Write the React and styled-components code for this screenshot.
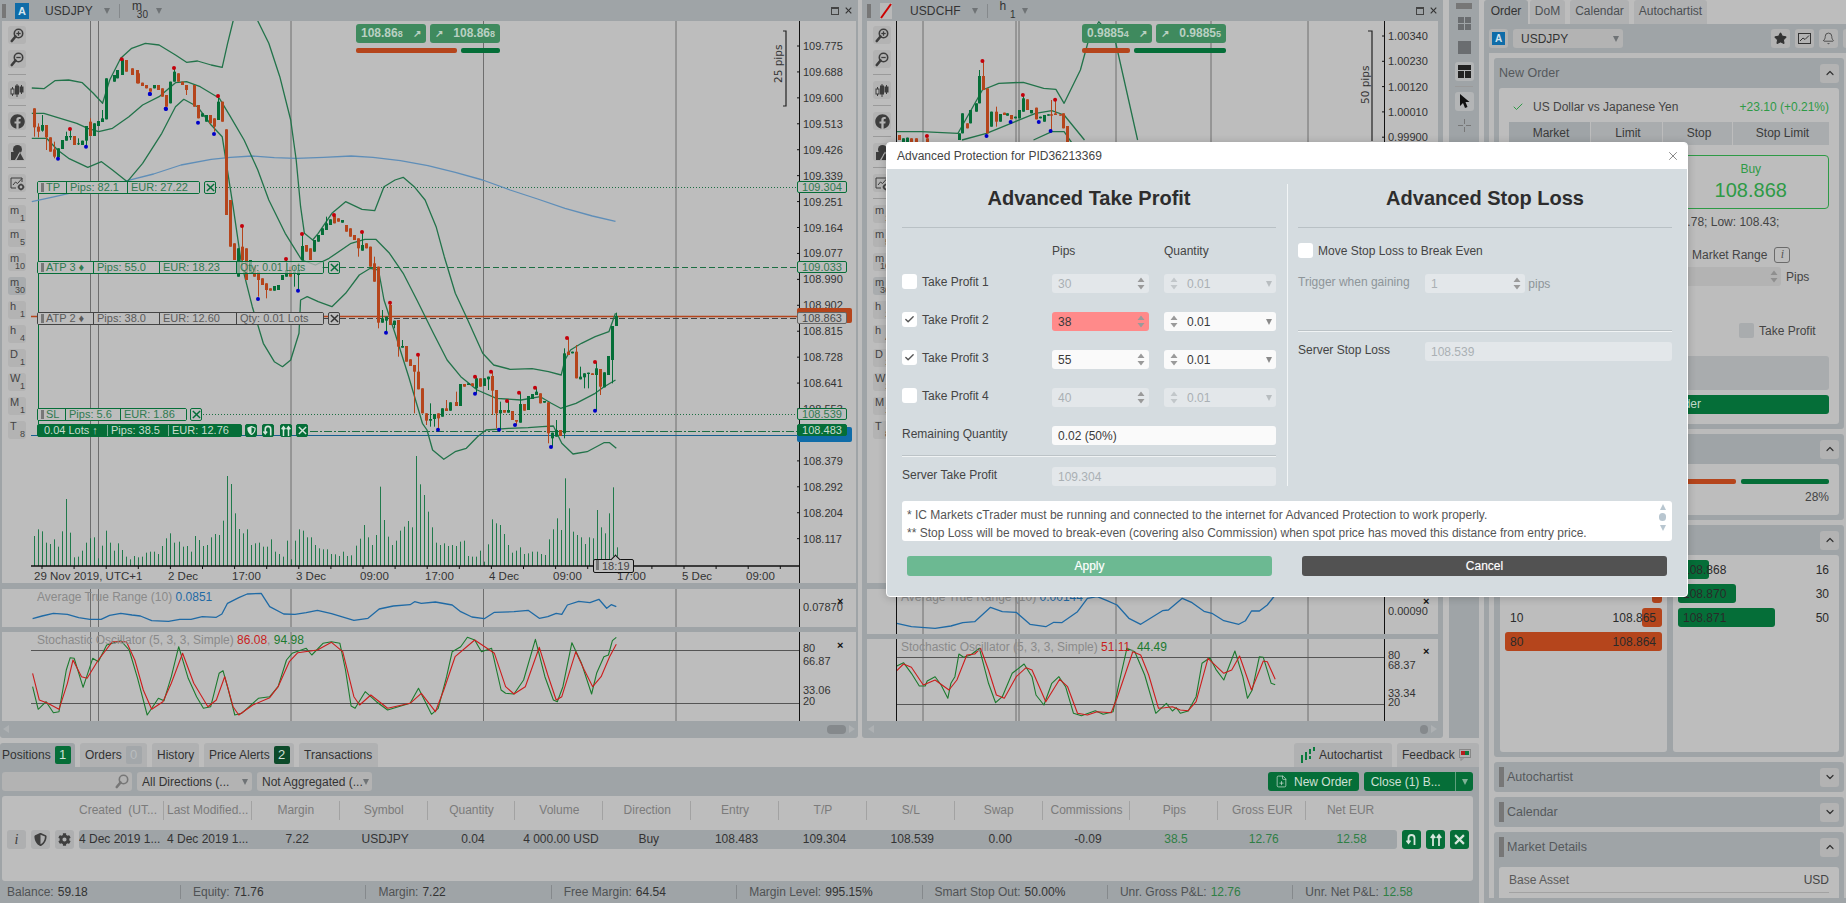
import React from "react";
import styled, { createGlobalStyle } from "styled-components";
import { Bell, Check, ChevronDown, ChevronUp, FilePlus, Star, X } from "lucide-react";
import { FaCog, FaFacebook, FaShieldAlt } from "react-icons/fa";

const FRAME = "#9fa4a7";
const BG = "#bdbdbd";
const GREEN = "#056e38";
const ORANGE = "#b5451c";
const TAG_GREEN = "#2f7a50";
const BAND = "#22734a";

const GlobalStyle = createGlobalStyle`
  html, body { margin: 0; padding: 0; width: 1846px; height: 903px; overflow: hidden; background: ${BG}; }
  body { font-family: "Liberation Sans", Arial, sans-serif; font-size: 12px; color: #3a3a3a; }
  * { box-sizing: border-box; }
  svg text { font-family: "Liberation Sans", Arial, sans-serif; }
`;

// ---- traced chart data, in the pixel space of the crops I measured ----
const z1 = (x, y) => [x / 1.823, y / 3];
const z2 = (x, y) => [x / 1.78, 430 + y / 3];
const z9 = (x, y) => [860 + x / 2.45, y / 3];
const z10 = (x, y) => [860 + x / 2.529, 580 + y / 3];
const z11 = (x, y) => [30 + x / 3, 80 + y / 3];
const z12 = (x, y) => [290 + x / 3, 250 + y / 3];

const mapPts = (flat, fn) => {
  const out = [];
  for (let i = 0; i < flat.length; i += 2) out.push(fn(flat[i], flat[i + 1]));
  return out;
};
const toPoints = (list) => list.map((p) => p[0].toFixed(1) + "," + p[1].toFixed(1)).join(" ");

const bandUpper = mapPts([58,264,80,266,100,242,125,240,150,248,170,280,187,310,200,240,220,175,240,145,265,130,290,135,320,165,340,187,360,183,385,195,405,202,415,130,425,63,438,-60,458,-60,470,63,490,130,510,230,530,360,540,480,548,620,555,700,570,720,580,700,605,640,630,605,660,628,683,632,700,560,720,540,735,532,755,560,775,600,795,680,810,770,830,880,850,950,880,1060,900,1095,930,1108,970,1106,1000,1115,1023,1125,1030,1080,1040,1050,1060,1030,1085,1010,1110,995,1122,940], z1);
const bandMid = mapPts([58,340,80,340,110,355,140,370,160,385,180,395,205,385,235,350,260,315,290,290,320,248,340,245,365,260,400,295,420,350,445,420,470,510,490,600,520,700,550,780,575,795,600,775,640,730,665,718,685,718,710,760,735,820,760,900,790,1000,815,1080,840,1130,870,1170,905,1195,950,1200,985,1190,1005,1210,1022,1225,1050,1210,1085,1180,1100,1162,1122,1140], z1);
const bandLower = [
  ...mapPts([58,415,85,415,105,450,125,475,160,502,185,485,205,510,232,545,260,490,295,400,320,320,335,298,360,320,385,375,405,410,425,620,440,790,460,920,480,1030,500,1085,515,1100,530,1080,545,1000,548,900,560,890,580,905,605,920,630,880,655,825,675,805,690,810,700,900,720,1000,745,1130,770,1270], z1),
  ...mapPts([760,0,770,60,790,88,810,65,830,55,850,20,865,0], z2),
  ...mapPts([905,-5,940,-7,965,-10,985,-12,1000,40,1020,72,1045,65,1075,38,1085,38,1097,55], z2),
];
const smaLine = mapPts([58,605,100,590,140,575,180,565,232,542,280,522,330,495,385,478,420,472,460,468,500,473,540,475,590,472,640,468,680,472,730,482,780,497,830,517,880,540,930,570,980,597,1030,625,1080,648,1122,664], z1);

// x, top, bottom, colour (0 orange, 1 green), wick top, wick bottom
const candlesZ1 = [[207,225,245,1],[214,210,235,1],[222,180,225,1],[230,180,215,0],[240,205,225,0],[250,210,250,0]];
const candlesZ11 = [
  [13,85,142,0,85,170],[25,140,155,0,130,172],[37,135,152,1,105,155],[49,135,172,0,135,210],[61,172,215,0],[73,208,230,0,185,235],[85,205,232,1],[97,180,207,1],[109,168,182,1,155,182],[121,168,172,1,150,180],[133,168,195,0],[145,190,193,1,175,195],[157,182,195,1],[169,138,182,1,138,200],[181,125,168,0,115,168],[193,130,168,1],[205,123,138,1],[217,115,126,1,90,126],[229,-5,118,1],
  [325,-20,10,0],[337,8,18,0],[349,15,25,0],[361,25,35,0],[373,15,25,1],[385,15,30,0],[397,25,50,0],[409,45,80,0],[421,5,70,1],[433,-25,5,1,-36,5],[445,-20,5,0],[457,5,15,0],[469,15,30,0,15,45],[493,15,80,0],[505,75,115,0],[517,100,110,1],[529,105,125,1],[541,105,130,0],[553,115,140,0,115,155],[565,65,120,1,48,120],[577,65,125,0],[589,148,405,0],[601,360,500,0],[613,490,540,0],[625,505,590,1],[637,500,540,0,440,560],[649,505,600,0],[661,540,580,1],[673,560,590,0],[685,575,600,0,575,650],[697,595,615,0],[709,610,630,0,610,655],[721,625,632,0],[733,618,632,1],[745,615,630,1],[757,585,600,1],[769,570,590,1,537,590],[781,560,590,0],[793,575,580,1,560,620],[805,570,585,1,560,630],[817,498,540,1,462,540],[829,495,515,0],[841,505,540,0],[853,480,515,1],[865,465,485,1],[877,445,465,1],[889,430,450,1,410,450],[901,418,435,1],[913,408,430,0],[925,415,425,0],[937,420,428,1],[949,435,455,0],[961,445,470,0],[973,465,480,0],[985,475,505,0,475,530],[997,495,512,1,456,512],[1009,490,505,0],[1021,500,560,0],[1033,550,605,0,530,605],
];
const candlesZ12 = [
  [265,50,218,0,50,235],[277,205,218,1,180,218],[289,200,212,1,200,245],[301,165,225,0,158,225],[313,212,225,1,212,235],[325,210,290,0,210,320],[337,288,293,1,270,293],[349,288,335,0],[361,328,348,0],[373,345,365,0,345,490],[385,365,418,0,314,418],[397,415,490,0],[409,490,512,0,490,525],[421,507,512,1,460,530],[433,492,507,1,492,530],[445,490,505,0,490,539],[457,475,500,1],[469,475,483,0,450,483],[481,457,482,1],[497,456,468,0,425,468],[509,402,468,1],[521,402,410,0],[533,400,405,1],[545,400,408,0],[557,385,415,1,380,431],[569,385,410,0],[581,385,408,1],[593,380,388,1,380,420],[605,378,422,0,365,495],[617,420,490,0,420,535],[629,480,490,1,455,539],[641,480,488,0],[653,480,488,1,453,488],[665,483,510,0],[677,510,515,0,510,525],[689,462,518,1,428,518],[701,462,482,0],[713,438,480,1],[725,432,447,1],[737,425,435,1,413,435],[749,430,460,0],[761,453,458,1],[773,457,550,0,457,580],[785,548,565,1,548,590],[797,540,560,1,510,560],[809,540,558,0],[821,310,550,1,295,565],[833,305,315,0,264,315],[845,305,310,1],[857,305,385,0,285,385],[869,380,388,1,350,388],[881,370,382,1,370,415],[893,368,372,1,368,415],[905,370,375,0],[917,355,375,1,336,482],[929,357,410,0,357,435],[941,367,412,1],[953,318,375,1],[965,228,330,1,228,400],[977,198,228,1,188,228],
];
const candlesRight = [[96,405,420,0],[105,415,430,1],[115,413,430,1],[125,415,430,0],[136,415,430,0],[164,415,430,0],[243,400,420,1],[250,340,400,1],[262,370,385,0],[270,330,370,1],[283,310,335,1],[292,228,310,1,210,310],[302,228,270,0,183,270],[312,265,400,0],[322,335,380,1],[332,335,365,0,320,380],[342,342,365,1],[352,338,345,0],[361,340,347,1],[371,345,358,0],[380,350,355,1],[390,330,355,1],[400,295,335,1,285,335],[410,298,330,0],[420,330,340,1],[430,323,358,0],[440,350,355,1],[450,345,365,1],[460,343,347,1],[468,343,347,0,300,390],[478,340,345,0,299,345],[490,343,347,0],[498,340,385,0],[508,378,430,0]];

const scaleCandles = (list, fn) =>
  list.map(([x, t, b, c, wt, wb]) => {
    const [cx, top] = fn(x, t);
    const [, bottom] = fn(x, b);
    const [, wickTop] = fn(x, wt === undefined ? t : wt);
    const [, wickBottom] = fn(x, wb === undefined ? b : wb);
    return { cx, top, bottom, c, wickTop, wickBottom };
  });

const leftCandles = [...scaleCandles(candlesZ1, z1), ...scaleCandles(candlesZ11, z11), ...scaleCandles(candlesZ12, z12)];
const rightCandles = scaleCandles(candlesRight, z9);

const leftRed = [...mapPts([120,147,564,48,636,438,768,537,816,462,912,405,996,456,432,-36], z11), ...mapPts([222,178], z1), ...mapPts([300,158,384,314,555,380,603,365,651,453,687,428,735,413,831,264,915,336], z12)];
const leftBlue = [...mapPts([84,236,168,200,360,42,408,87,504,128,552,162,684,657,804,632], z11), ...mapPts([273,282,302,326], z1), ...mapPts([288,248,444,539,555,431,627,539,675,525,783,591,915,482], z12)];
const rightRed = mapPts([164,408,300,183,399,285,478,299], z9);
const rightBlue = mapPts([310,408,369,366,438,366,467,393], z9);

const volumeTops = [318,298,304,338,342,328,350,304,207,308,382,380,362,338,325,322,385,347,302,338,362,340,360,380,388,378,382,380,368,365,365,372,348,325,310,338,335,350,348,365,318,330,348,345,322,312,315,272,138,162,250,297,310,298,345,340,338,350,350,328,365,372,380,332,388,332,298,302,322,322,345,355,358,358,372,373,378,365,378,376,347,326,285,322,345,315,170,270,320,345,332,302,290,273,292,78,163,195,245,292,338,345,340,348,345,348,335,332,378,380,380,362,395,343,268,280,285,312,345,368,362,352,372,370,365,365,372,375,328,298,265,300,145,235,305,315,322,342,322,325,240,292,310,250,172,352];

const atrLeft = mapPts([58,566,75,558,95,550,120,553,140,563,160,568,180,568,195,556,215,550,235,555,250,558,270,572,300,574,320,568,340,568,360,560,385,562,395,552,405,520,425,503,440,492,465,490,480,530,505,552,525,553,545,548,565,541,590,551,630,571,655,565,675,537,700,528,730,524,738,515,750,520,775,516,805,525,820,545,840,561,862,566,880,547,915,545,940,541,960,565,975,560,990,550,1000,553,1010,525,1030,514,1050,518,1066,508,1080,535,1088,524,1097,530], z2);
const stochGreenLeft = mapPts([58,770,68,838,82,815,95,848,105,845,118,720,125,683,132,685,148,772,165,685,175,695,190,645,215,632,230,660,245,745,262,855,282,805,292,812,305,740,318,650,335,745,350,800,362,835,375,830,390,730,397,722,405,770,418,855,430,850,460,805,480,800,495,770,510,690,520,670,545,655,555,675,575,640,590,635,605,640,615,720,625,828,632,835,650,785,670,815,690,840,730,820,745,775,768,853,780,835,795,740,805,665,820,650,832,622,845,630,857,665,875,655,892,780,900,790,915,792,932,750,953,628,970,740,985,810,992,815,1002,770,1018,638,1035,700,1053,792,1062,730,1075,680,1083,675,1090,632,1097,622], z2);
const stochRedLeft = mapPts([58,730,70,810,85,820,105,838,120,760,130,690,145,740,155,745,175,690,200,635,225,635,240,690,255,780,270,838,290,815,305,760,325,670,345,760,370,830,385,810,400,740,415,830,425,855,450,825,480,803,495,770,515,695,530,668,565,660,590,637,610,665,630,800,640,825,660,795,690,835,730,820,750,790,775,845,790,780,810,680,845,630,880,670,900,770,915,792,935,770,960,652,975,735,990,810,1000,800,1025,665,1040,720,1055,770,1070,740,1085,680,1097,643], z2);

const atrRight = mapPts([93,130,130,140,190,145,230,138,260,128,290,125,330,82,360,95,395,97,430,133,470,140,490,127,510,128,550,95,575,55,600,50,625,62,650,75,680,115,710,133,765,92,780,90,815,55,840,68,870,94,890,100,920,122,958,133,975,122,990,93,1010,93,1030,75,1050,45], z10);
const stochGreenRight = mapPts([93,258,110,248,130,280,150,318,165,318,170,303,190,290,205,315,222,355,230,310,240,290,250,222,262,232,280,225,302,205,325,310,343,368,360,350,385,280,415,252,435,290,445,345,465,375,485,310,503,290,520,320,540,400,560,407,595,392,615,403,640,395,655,310,675,205,695,215,720,285,748,400,775,370,790,393,800,383,810,400,830,393,850,350,865,250,885,233,900,268,920,300,948,213,968,290,980,355,992,330,1010,230,1020,232,1040,310,1050,314], z10);
const stochRedRight = mapPts([93,272,110,252,130,262,160,315,190,300,225,330,245,300,270,225,290,222,305,205,325,270,345,345,365,355,395,290,420,263,435,270,470,365,505,298,525,320,550,400,575,405,600,395,635,398,650,355,690,215,710,225,730,285,755,385,770,383,790,380,810,390,830,392,850,365,880,235,920,280,940,270,960,228,990,330,1020,243,1030,245,1050,298], z10);
const rightBands = [
  mapPts([90,395,150,395,240,400,300,270,340,250,400,247,450,265,480,268,500,310,540,210,560,120,585,65,625,120,680,420], z9),
  mapPts([250,420,310,400,370,370,430,340,470,332,500,345,550,420], z9),
  mapPts([425,420,470,395,500,395,520,430], z9),
];

const leftGrid = [90.5, 98.5, 291, 483.5, 676];
const rightGrid = [923, 1016, 1019, 1116, 1211, 1308];
// 108.466 sits fully under the position tags in the picture, so it is left out
const leftPrices = ["109.775","109.688","109.600","109.513","109.426","109.339","109.251","109.164","109.077","108.990","108.902","108.815","108.728","108.641","108.553",null,"108.379","108.292","108.204","108.117"];
const dateLabels = [["29 Nov 2019, UTC+1",34],["2 Dec",168],["17:00",232],["3 Dec",296],["09:00",360],["17:00",425],["4 Dec",489],["09:00",553],["17:00",617],["5 Dec",682],["09:00",746]];

// ---- layout ----
const Page = styled.div`
  display: flex;
  width: 1846px;
  height: 903px;
  position: relative;
  overflow: hidden;
  background: ${BG};
`;
const LeftArea = styled.div`
  width: 1479px;
  display: flex;
  flex-direction: column;
`;
const ChartsRow = styled.div`
  height: 738px;
  display: flex;
`;
const ChartWindow = styled.div`
  width: ${(p) => p.$w}px;
  margin-right: ${(p) => p.$mr}px;
  padding: 0 ${(p) => p.$side}px;
  background: ${FRAME};
  display: flex;
  flex-direction: column;
  border-radius: 0 0 3px 3px;
  overflow: hidden;
`;
const WinHeader = styled.div`
  height: 21px;
  flex: none;
  display: flex;
  align-items: center;
  color: #333;
  position: relative;
`;
const Grip = styled.div`
  width: ${(p) => p.$w || 4}px;
  height: ${(p) => p.$h || 16}px;
  flex: none;
  background: radial-gradient(circle, #777 0.8px, transparent 1px) 0 0 / 2px 2px;
`;
const SymbolChip = styled.div`
  width: 14px;
  height: 16px;
  margin-left: ${(p) => p.$ml}px;
  flex: none;
  background: ${(p) => p.$bg || "#0f6ca8"};
  color: #d5e4ee;
  font-weight: bold;
  font-size: 11px;
  line-height: 16px;
  text-align: center;
`;
const WinSymbol = styled.span`
  margin-left: ${(p) => p.$ml}px;
  font-size: 12px;
  letter-spacing: 0.1px;
`;
const Caret = styled.span`
  display: inline-block;
  flex: none;
  width: 0;
  height: 0;
  margin-left: ${(p) => p.$ml || 0}px;
  border-left: 3.5px solid transparent;
  border-right: 3.5px solid transparent;
  border-top: 6px solid ${(p) => p.$color || "#6f7376"};
`;
const HeadSep = styled.span`
  width: 1px;
  height: 14px;
  background: #85898c;
  margin: 0 ${(p) => p.$right}px 0 ${(p) => p.$left}px;
`;
const HeadTf = styled.span`
  width: 16px;
  display: flex;
  flex-direction: column;
  font-size: 12px;
  line-height: 8px;
  b { font-weight: normal; }
  i { font-style: normal; font-size: 10px; align-self: flex-end; line-height: 9px; }
`;
const WinButtons = styled.span`
  margin-left: auto;
  margin-right: ${(p) => p.$mr}px;
  display: flex;
  align-items: center;
  gap: 6px;
`;
const RestoreBox = styled.span`
  width: 8px;
  height: 8px;
  border: 1px solid #444;
  border-top-width: 2px;
`;
const Pane = styled.div`
  height: ${(p) => p.$h}px;
  flex: none;
  margin-bottom: ${(p) => p.$mb || 0}px;
  background: ${BG};
  display: flex;
`;
const ToolStrip = styled.div`
  width: 29px;
  flex: none;
  padding: 5px 0 0 6px;
  display: flex;
  flex-direction: column;
  gap: 6px;
`;
const ToolBtn = styled.div`
  width: 18px;
  height: 18px;
  border-radius: 3px;
  background: ${(p) => (p.$active ? "#a9acae" : "#b3b3b3")};
  display: flex;
  align-items: center;
  justify-content: center;
  color: #3d3d3d;
`;
const TfBtn = styled(ToolBtn)`
  flex-direction: column;
  align-items: stretch;
  justify-content: flex-start;
  padding: 1px 1px 0 2px;
  font-size: 11px;
  line-height: 8px;
  color: #444;
  b { font-weight: normal; }
  i { font-style: normal; font-size: 9px; align-self: flex-end; }
`;
const ToolSep = styled.div`
  width: 18px;
  height: 1px;
  background: #9a9a9a;
`;
const Spacer = styled.div`
  width: 29px;
  flex: none;
`;
const Canvas = styled.div`
  position: relative;
  flex: 1;
  min-width: 0;
  overflow: hidden;
  svg { display: block; }
`;
const ScrollStrip = styled.div`
  height: 16px;
  flex: none;
  display: flex;
  align-items: center;
  padding: 0 1px;
`;
const ArrowLeft = styled.span`
  width: 0;
  height: 0;
  border-top: 4px solid transparent;
  border-bottom: 4px solid transparent;
  border-right: 6px solid #aeb1b3;
`;
const ArrowRight = styled.span`
  width: 0;
  height: 0;
  margin-left: 3px;
  border-top: 4px solid transparent;
  border-bottom: 4px solid transparent;
  border-left: 6px solid #aeb1b3;
`;
const ScrollThumb = styled.span`
  margin-left: auto;
  width: ${(p) => p.$w}px;
  height: 9px;
  border-radius: 4px;
  background: #85898c;
`;
const PipsText = styled.text`
  font-size: 10.5px;
  fill: #333;
  && { font-family: "DejaVu Sans", sans-serif; }
`;

// overlays on the charts
const QuoteBtn = styled.div`
  position: absolute;
  left: ${(p) => p.$x}px;
  top: 3px;
  width: ${(p) => p.$w}px;
  height: 19px;
  border-radius: 3px;
  background: #3f8a5e;
  color: #b9d0c2;
  font-size: 12px;
  font-weight: bold;
  line-height: 19px;
  padding: 0 5px;
  display: flex;
  justify-content: space-between;
  align-items: center;
  small { font-size: 9px; }
  em { font-style: normal; font-size: 10px; }
`;
const QuoteBar = styled.div`
  position: absolute;
  left: ${(p) => p.$x}px;
  top: 27px;
  width: ${(p) => p.$w}px;
  height: 5px;
  border-radius: 2px;
  background: ${(p) => p.$color};
`;
const TagBar = styled.div`
  position: absolute;
  left: ${(p) => p.$x}px;
  top: ${(p) => p.$y}px;
  display: flex;
  height: 13px;
  border: 1px solid ${(p) => (p.$tone === "dark" ? "#444" : GREEN)};
  border-radius: 2px;
  background: ${(p) => (p.$tone === "solid" ? GREEN : "transparent")};
  color: ${(p) => (p.$tone === "dark" ? "#5a5a5a" : p.$tone === "solid" ? "#c9dccf" : TAG_GREEN)};
  font-size: 11px;
  line-height: 11px;
  white-space: nowrap;
`;
const TagCell = styled.div`
  width: ${(p) => p.$w}px;
  padding-left: ${(p) => p.$pad || 3}px;
  background: ${(p) => (p.$solid ? "transparent" : p.$clear ? "rgba(189, 189, 189, 0.72)" : BG)};
  border-left: ${(p) => (p.$first ? "0" : "1px solid " + (p.$tone === "dark" ? "#444" : p.$solid ? "#7fb197" : GREEN))};
  display: flex;
  align-items: center;
  gap: 2px;
  font-size: ${(p) => (p.$clear ? "10.5px" : "11px")};
  overflow: hidden;
`;
const TagBox = styled.div`
  position: absolute;
  left: ${(p) => p.$x}px;
  top: ${(p) => p.$y}px;
  width: ${(p) => p.$w || 12}px;
  height: 13px;
  border: 1px solid ${(p) => (p.$tone === "dark" ? "#444" : GREEN)};
  border-radius: 2px;
  background: ${(p) => (p.$tone === "solid" ? GREEN : BG)};
  color: ${(p) => (p.$tone === "dark" ? "#333" : p.$tone === "solid" ? "#d6e6dc" : GREEN)};
  display: flex;
  align-items: center;
  justify-content: center;
`;
const PriceTag = styled.div`
  position: absolute;
  left: 766px;
  top: ${(p) => p.$y}px;
  width: 50px;
  height: 12px;
  border: 1px solid ${(p) => (p.$tone === "dark" ? "#666" : GREEN)};
  border-radius: 2px;
  background: ${(p) => (p.$tone === "solid" ? GREEN : BG)};
  color: ${(p) => (p.$tone === "dark" ? "#4a4a4a" : p.$tone === "solid" ? "#c9dccf" : TAG_GREEN)};
  font-size: 11px;
  line-height: 10px;
  text-align: center;
`;
const PriceBack = styled.div`
  position: absolute;
  left: 766px;
  top: ${(p) => p.$y}px;
  width: 55px;
  height: 15px;
  border-radius: 2px;
  background: ${(p) => p.$color};
`;
const TimeTag = styled.div`
  position: absolute;
  left: 562px;
  top: 538px;
  width: 41px;
  height: 14px;
  border: 1px solid #111;
  border-radius: 2px;
  background: ${BG};
  color: #444;
  font-size: 11px;
  line-height: 12px;
  display: flex;
  gap: 3px;
  padding-left: 2px;
  &::before {
    content: "";
    position: absolute;
    top: -4px;
    left: 18px;
    width: 6px;
    height: 6px;
    background: ${BG};
    border-left: 1px solid #111;
    border-top: 1px solid #111;
    transform: rotate(45deg);
  }
`;

// toolbar right of the charts
const SideToolbar = styled.div`
  width: 30px;
  flex: none;
  background: ${FRAME};
  padding-top: 3px;
  display: flex;
  flex-direction: column;
  align-items: center;
  gap: 5px;
`;
const BarBtn = styled(ToolBtn)`
  width: 19px;
  height: 19px;
  background: ${(p) => (p.$active ? "#b3b5b6" : "transparent")};
`;

// bottom panel
const BottomTabs = styled.div`
  margin-top: 5px;
  height: 24px;
  display: flex;
  flex: none;
`;
const BTab = styled.div`
  width: ${(p) => p.$w}px;
  margin-right: ${(p) => p.$mr || 0}px;
  margin-left: ${(p) => (p.$auto ? "auto" : 0)};
  height: 24px;
  padding-left: ${(p) => p.$pad || 5}px;
  display: flex;
  align-items: center;
  gap: 4px;
  background: ${(p) => (p.$active ? FRAME : "#b0b1b2")};
  border-radius: 3px 3px 0 0;
  color: #333;
`;
const Badge = styled.span`
  min-width: 16px;
  height: 18px;
  border-radius: 2px;
  text-align: center;
  line-height: 18px;
  font-size: 13px;
  background: ${(p) => p.$bg};
  color: ${(p) => p.$color};
`;
const BottomBody = styled.div`
  height: 136px;
  background: ${FRAME};
  display: flex;
  flex-direction: column;
`;
const FilterBar = styled.div`
  height: 29px;
  flex: none;
  padding: 5px 6px 0 2px;
  display: flex;
  gap: 5px;
`;
const SearchBox = styled.div`
  width: 130px;
  height: 19px;
  border-radius: 3px;
  background: #b3b3b3;
  color: #777;
  display: flex;
  align-items: center;
  justify-content: flex-end;
  padding-right: 3px;
`;
const FilterSelect = styled.div`
  width: 115px;
  height: 19px;
  border-radius: 3px;
  background: #b3b3b3;
  display: flex;
  align-items: center;
  justify-content: space-between;
  padding: 0 4px 0 5px;
  color: #333;
  white-space: nowrap;
`;
const GreenBtn = styled.div`
  height: 19px;
  width: ${(p) => p.$w}px;
  margin-left: ${(p) => (p.$auto ? "auto" : 0)};
  border-radius: 3px;
  background: ${GREEN};
  color: #cfe0d6;
  display: flex;
  align-items: center;
  justify-content: center;
  gap: 6px;
  white-space: nowrap;
`;
const SplitPart = styled.span`
  width: 18px;
  height: 19px;
  border-left: 1px solid #5f9f7d;
  display: flex;
  align-items: center;
  justify-content: center;
  margin-left: auto;
`;
const TableCard = styled.div`
  height: 85px;
  flex: none;
  margin: 0 6px 0 2px;
  background: ${BG};
  border-radius: 3px;
  padding-top: 5px;
`;
const TableHead = styled.div`
  display: grid;
  grid-template-columns: 85px repeat(14, 87.86px);
  padding-left: 77px;
  height: 19px;
  color: #7b7b7b;
  line-height: 19px;
`;
const HeadCell = styled.div`
  text-align: ${(p) => (p.$left ? "left" : "center")};
  padding-left: ${(p) => (p.$pad ? 3 : p.$left ? 0 : 1)}px;
  border-right: ${(p) => (p.$end ? "0" : "1px solid #a2a2a2")};
  white-space: nowrap;
  overflow: hidden;
`;
const TableRow = styled.div`
  margin-top: 10px;
  height: 19px;
  display: flex;
`;
const RowIcons = styled.div`
  width: 77px;
  flex: none;
  padding-left: 5px;
  display: flex;
  gap: 5px;
`;
const RowIcon = styled.div`
  width: 19px;
  height: 19px;
  border-radius: 3px;
  background: #aeafb0;
  color: #3f3f3f;
  display: flex;
  align-items: center;
  justify-content: center;
  font-family: "Liberation Serif", serif;
  font-style: italic;
  font-size: 14px;
`;
const RowCells = styled.div`
  display: grid;
  grid-template-columns: 85px repeat(14, 87.86px);
  width: 1318px;
  flex: none;
  padding-right: 3px;
  background: ${FRAME};
  border-radius: 3px;
  line-height: 19px;
  color: #333;
`;
const RowCell = styled.div`
  text-align: ${(p) => (p.$left ? "left" : "center")};
  padding-left: ${(p) => (p.$pad ? 3 : p.$left ? 0 : 3)}px;
  color: ${(p) => (p.$green ? "#2f7f45" : "inherit")};
  white-space: nowrap;
  overflow: hidden;
`;
const RowActions = styled.div`
  margin-left: 5px;
  display: flex;
  gap: 5px;
`;
const ActionBtn = styled.div`
  width: 19px;
  height: 19px;
  border-radius: 3px;
  background: ${GREEN};
  color: #d6e6dc;
  display: flex;
  align-items: center;
  justify-content: center;
`;
const StatusBar = styled.div`
  height: 22px;
  display: flex;
  align-items: center;
`;
const StatusItem = styled.div`
  width: ${(p) => (p.$first ? 181 : 185.4)}px;
  height: 14px;
  flex: none;
  padding-left: ${(p) => (p.$first ? 7 : 12)}px;
  border-right: ${(p) => (p.$end ? "0" : "1px solid #85898c")};
  line-height: 14px;
  color: #4f5254;
  white-space: nowrap;
  span { margin-left: 4px; color: ${(p) => (p.$green ? "#2f7f45" : "#333")}; }
`;

// right side panel
const Sidebar = styled.div`
  width: 362px;
  margin-left: 5px;
  flex: none;
  display: flex;
  flex-direction: column;
`;
const SideTabs = styled.div`
  height: 24px;
  flex: none;
  display: flex;
`;
const STab = styled.div`
  width: ${(p) => p.$w}px;
  margin-right: ${(p) => p.$mr || 0}px;
  background: ${(p) => (p.$active ? FRAME : "#b0b1b2")};
  border-radius: 3px 3px 0 0;
  color: ${(p) => (p.$active ? "#333" : "#4b4f52")};
  line-height: 22px;
  text-align: center;
`;
const SideBody = styled.div`
  flex: 1;
  min-height: 0;
  background: ${FRAME};
  display: flex;
  flex-direction: column;
  padding: 5px 0 5px 5px;
`;
const SymbolRow = styled.div`
  height: 19px;
  flex: none;
  display: flex;
  gap: 5px;
  align-items: center;
  overflow: hidden;
`;
const SymbolSelect = styled.div`
  width: 110px;
  height: 19px;
  flex: none;
  border-radius: 3px;
  background: #b3b3b3;
  padding: 0 4px 0 8px;
  display: flex;
  align-items: center;
  justify-content: space-between;
  color: #333;
`;
const ChipBtn = styled.div`
  width: 19px;
  height: 19px;
  flex: none;
  border-radius: 3px;
  background: #b3b3b3;
  display: flex;
  align-items: center;
  justify-content: center;
  color: #333;
  margin-left: ${(p) => p.$ml || 0}px;
`;
const InnerChip = styled.span`
  width: 13px;
  height: 13px;
  background: #0f6ca8;
  color: #d5e4ee;
  font-size: 10px;
  font-weight: bold;
  text-align: center;
  line-height: 13px;
`;
const Scroller = styled.div`
  margin-top: 5px;
  flex: 1;
  min-height: 0;
  overflow: hidden;
  background: #bbbbbb;
  padding: 5px 2px 0 5px;
  display: flex;
  flex-direction: column;
  gap: 5px;
`;
const Section = styled.div`
  flex: none;
  background: ${FRAME};
  border-radius: 3px;
  padding: 0 5px ${(p) => (p.$closed ? 0 : 5)}px;
`;
const SectionHead = styled.div`
  height: 30px;
  display: flex;
  align-items: center;
  color: #55595c;
  gap: 3px;
  font-size: 12.5px;
`;
const ChevBtn = styled.div`
  margin-left: auto;
  width: 19px;
  height: 19px;
  border-radius: 3px;
  background: #b3b3b3;
  display: flex;
  align-items: center;
  justify-content: center;
  color: #333;
`;
const Card = styled.div`
  background: ${BG};
  border-radius: 3px;
  padding: ${(p) => p.$pad || "0 10px 10px"};
`;
const InstrumentRow = styled.div`
  height: 34px;
  display: flex;
  align-items: center;
  padding-top: 3px;
  color: #444;
  svg { margin: 0 9px 0 3px; color: #2e9a46; }
  strong { margin-left: auto; font-weight: normal; color: #2e9a46; }
`;
const OrderTabs = styled.div`
  height: 23px;
  display: grid;
  grid-template-columns: 81px 71px 69px 1fr;
  gap: 1px;
  background: ${BG};
`;
const OrderTab = styled.div`
  background: ${(p) => (p.$active ? FRAME : "#a9acae")};
  text-align: center;
  line-height: 23px;
  padding-left: 3px;
  color: #3a3a3a;
`;
const QuoteRow = styled.div`
  margin-top: 10px;
  height: 54px;
  display: grid;
  grid-template-columns: 1fr 1fr;
  gap: 7px;
`;
const QuoteBox = styled.div`
  border: 1px solid #2e9a46;
  border-radius: 4px;
  color: #2e9a46;
  text-align: center;
  font-size: 12px;
  padding-top: 6px;
  b { display: block; font-weight: normal; font-size: 20px; line-height: 24px; margin-top: 2px; }
`;
const StatsLine = styled.div`
  margin-top: 6px;
  height: 14px;
  line-height: 14px;
  color: #444;
  padding-left: 127px;
  white-space: nowrap;
`;
const RangeLabel = styled.div`
  margin-top: 18px;
  height: 16px;
  padding-left: 183px;
  display: flex;
  align-items: center;
  gap: 7px;
  color: #444;
`;
const InfoBox = styled.span`
  width: 16px;
  height: 16px;
  border: 1px solid #6b6b6b;
  border-radius: 3px;
  text-align: center;
  line-height: 13px;
  font-family: "Liberation Serif", serif;
  font-style: italic;
  color: #555;
`;
const RangeInput = styled.div`
  margin-top: 4px;
  height: 19px;
  padding-left: 163px;
  display: flex;
  align-items: center;
  color: #444;
  gap: 5px;
`;
const RangeField = styled.div`
  width: 109px;
  height: 19px;
  background: #b3b3b3;
  border-radius: 3px;
  display: flex;
  align-items: center;
  justify-content: flex-end;
  padding-right: 3px;
`;
const TpRow = styled.div`
  margin-top: 37px;
  height: 15px;
  padding-left: 230px;
  display: flex;
  align-items: center;
  gap: 5px;
  color: #444;
`;
const DimCheck = styled.span`
  width: 15px;
  height: 15px;
  border-radius: 2px;
  background: #a9acae;
`;
const DimBlock = styled.div`
  margin-top: 18px;
  height: 34px;
  border-radius: 3px;
  background: #a9acae;
`;
const PlaceBtn = styled.div`
  margin-top: 5px;
  height: 19px;
  border-radius: 3px;
  background: ${GREEN};
  color: #c4dccd;
  text-align: center;
  line-height: 19px;
`;
const SentBars = styled.div`
  display: flex;
  gap: 5px;
  height: 5px;
`;
const SentBar = styled.div`
  flex: ${(p) => p.$flex};
  border-radius: 2px;
  background: ${(p) => p.$color};
`;
const SentPct = styled.div`
  margin-top: 6px;
  height: 14px;
  display: flex;
  justify-content: space-between;
  color: #444;
`;
const DomGrid = styled.div`
  display: grid;
  grid-template-columns: 167px 166px;
  gap: 6px;
  margin-left: 1px;
`;
const DomCol = styled.div`
  height: 197px;
  background: ${BG};
  border-radius: 3px;
  padding: 5px;
  display: flex;
  flex-direction: column;
  gap: 5px;
`;
const DomRowBox = styled.div`
  position: relative;
  height: 19px;
  display: flex;
  justify-content: space-between;
  align-items: center;
  padding: 0 ${(p) => (p.$side === "sell" ? "6px 0 5px" : "5px 0 5px")};
  color: #2a2a2a;
  span { position: relative; }
`;
const DomBar = styled.div`
  position: absolute;
  top: 0;
  bottom: 0;
  ${(p) => (p.$side === "sell" ? "right: 0;" : "left: 0;")}
  border-radius: 3px;
  background: ${(p) => (p.$side === "sell" ? ORANGE : GREEN)};
`;
const DetailRow = styled.div`
  height: 26px;
  border-bottom: 1px solid #a2a2a2;
  display: flex;
  justify-content: space-between;
  align-items: center;
  color: #5a5a5a;
  margin-top: 5px;
  span:last-child { color: #444; }
`;

// modal
const Modal = styled.div`
  position: absolute;
  left: 886px;
  top: 142px;
  width: 802px;
  background: #d5dce0;
  border: 1px solid #fff;
  border-radius: 4px;
  box-shadow: 0 1px 8px rgba(0, 0, 0, 0.2);
  overflow: hidden;
  color: #444;
  display: flex;
  flex-direction: column;
`;
const ModalHead = styled.div`
  height: 26px;
  background: #fff;
  display: flex;
  align-items: center;
  justify-content: space-between;
  padding: 0 7px 0 10px;
  color: #444;
`;
const ModalColumns = styled.div`
  display: flex;
  padding: 15px 15px 0;
`;
const ModalCol = styled.div`
  width: 374px;
  flex: none;
`;
const ColDivider = styled.div`
  width: 1px;
  flex: none;
  margin: 0 10px 0 11px;
  background: #f2f5f6;
`;
const ColTitle = styled.h2`
  margin: 0;
  height: 28px;
  font-size: 20px;
  line-height: 28px;
  font-weight: bold;
  color: #2d2d2d;
  text-align: center;
`;
const Rule = styled.div`
  height: 1px;
  margin-top: ${(p) => p.$mt}px;
  background: ${(p) => (p.$light ? "#f0f3f4" : "#b9c1c5")};
  box-shadow: ${(p) => (p.$light ? "0 -1px 0 #bcc3c7" : "none")};
`;
const ProfitGrid = styled.div`
  margin-top: 16px;
  display: grid;
  grid-template-columns: 150px 97px 127px;
  row-gap: 19px;
  align-items: center;
`;
const GridHead = styled.div`
  height: 14px;
  line-height: 14px;
  margin: 0 0 -3px ${(p) => p.$ml || 0}px;
`;
const CheckLabel = styled.label`
  display: flex;
  align-items: center;
  gap: 5px;
  height: 19px;
  color: #444;
  margin-top: ${(p) => p.$mt || 0}px;
`;
const LabelText = styled.span`
  margin-top: -4px;
`;
const CheckBox = styled.span`
  width: 15px;
  height: 15px;
  flex: none;
  background: #fff;
  border-radius: 3px;
  display: flex;
  align-items: center;
  justify-content: center;
  color: #555;
  margin-top: ${(p) => p.$nudge || 0}px;
`;
const Field = styled.div`
  height: 19px;
  border-radius: 3px;
  background: ${(p) => (p.$state === "off" ? "#e3e7ea" : p.$state === "bad" ? "#ff8a8a" : "#fafafa")};
  color: ${(p) => (p.$state === "off" ? "#aab0b4" : "#3a3a3a")};
  display: flex;
  align-items: center;
  padding: 0 4px 0 6px;
  justify-content: space-between;
  margin-left: ${(p) => p.$ml || 0}px;
  width: ${(p) => (p.$w ? p.$w + "px" : "auto")};
  grid-column: ${(p) => p.$span || "auto"};
  font-size: 12px;
`;
const QtyValue = styled.span`
  margin-right: auto;
  margin-left: 9px;
`;
const Remaining = styled.div`
  height: 19px;
  line-height: 16px;
`;
const ServerRow = styled.div`
  margin-top: ${(p) => p.$mt}px;
  display: grid;
  grid-template-columns: ${(p) => p.$cols};
  align-items: center;
  color: #444;
  height: 19px;
  span { margin-top: -3px; }
`;
const TriggerRow = styled.div`
  margin-top: 14px;
  display: flex;
  align-items: center;
  height: 19px;
  color: #8d9599;
`;
const TriggerLabel = styled.span`
  width: 127px;
  margin-top: -3px;
`;
const NoteBox = styled.div`
  margin: 15px 15px 0;
  height: 40px;
  background: #fff;
  border-radius: 3px;
  padding: 5px 6px 5px 5px;
  line-height: 18px;
  color: #555;
  display: flex;
  justify-content: space-between;
  white-space: nowrap;
`;
const NoteScroll = styled.div`
  width: 7px;
  margin-top: -2px;
  display: flex;
  flex-direction: column;
  align-items: center;
  gap: 3px;
`;
const NoteUp = styled.span`
  width: 0;
  height: 0;
  border-left: 3.5px solid transparent;
  border-right: 3.5px solid transparent;
  border-bottom: 6px solid #b8c6d0;
`;
const NoteDown = styled.span`
  width: 0;
  height: 0;
  margin-top: 1px;
  border-left: 3.5px solid transparent;
  border-right: 3.5px solid transparent;
  border-top: 6px solid #b8c6d0;
`;
const NoteThumb = styled.span`
  width: 7px;
  height: 8px;
  border-radius: 4px;
  background: #b8c6d0;
`;
const ModalButtons = styled.div`
  margin: 15px 20px 20px;
  display: grid;
  grid-template-columns: 365px 365px;
  gap: 30px;
`;
const ModalBtn = styled.div`
  height: 20px;
  border-radius: 3px;
  background: ${(p) => (p.$dark ? "#525252" : "#6cb992")};
  color: #fff;
  text-align: center;
  line-height: 20px;
  text-shadow: 0 0 1px rgba(255, 255, 255, 0.4);
`;

// ---- small drawings ----
const Magnifier = ({ minus, plain }) => (
  <svg width="14" height="15" viewBox="0 0 14 15" fill="none" stroke="currentColor">
    <circle cx="8.5" cy="5.5" r="4.2" strokeWidth="1.6" />
    <line x1="5.5" y1="8.5" x2="1.8" y2="13" strokeWidth="2.6" strokeLinecap="round" />
    {!plain && <line x1="6.3" y1="5.5" x2="10.7" y2="5.5" strokeWidth="1.3" />}
    {!plain && !minus && <line x1="8.5" y1="3.3" x2="8.5" y2="7.7" strokeWidth="1.3" />}
  </svg>
);
const CandleIcon = () => (
  <svg width="14" height="15" viewBox="0 0 14 15" stroke="#3d3d3d" fill="#3d3d3d">
    <line x1="2.5" y1="4" x2="2.5" y2="13" /><rect x="1" y="6" width="3" height="5" fill="#bbb" />
    <line x1="7" y1="1" x2="7" y2="14" /><rect x="5.5" y="3" width="3" height="8" />
    <line x1="11.5" y1="2" x2="11.5" y2="11" /><rect x="10" y="4" width="3" height="5" />
  </svg>
);
const ShapesIcon = () => (
  <svg width="15" height="15" viewBox="0 0 15 15" fill="#3d3d3d">
    <circle cx="7.5" cy="4.5" r="4.5" />
    <rect x="1" y="7" width="7" height="8" />
    <path d="M10 6.5L15 15H5z" fill="#b3b3b3" />
    <path d="M10.2 8L14 15H6.5z" />
  </svg>
);
const ChartGearIcon = () => (
  <svg width="15" height="15" viewBox="0 0 15 15" fill="none" stroke="#3d3d3d">
    <path d="M12 6V2H1v10h5" />
    <path d="M3 9l2.5-3 2 1.5L12 2.5" />
    <circle cx="11" cy="11" r="2.2" strokeWidth="1.6" />
    <path d="M11 7.5v1.2M11 13.3v1.2M7.5 11h1.2M13.3 11h1.2" />
  </svg>
);
const XMark = ({ size = 9, w = 1.6 }) => (
  <svg width={size} height={size} viewBox="0 0 10 10" stroke="currentColor" strokeWidth={w}>
    <line x1="1" y1="1" x2="9" y2="9" /><line x1="9" y1="1" x2="1" y2="9" />
  </svg>
);
const UndoIcon = () => (
  <svg width="11" height="13" viewBox="0 0 11 13" fill="none" stroke="currentColor" strokeWidth="1.8">
    <path d="M2.5 9V5a3 3 0 0 1 6 0v7" />
    <path d="M0.5 7.5L2.5 10l2-2.5" />
  </svg>
);
const DoubleUp = () => (
  <svg width="12" height="13" viewBox="0 0 12 13" fill="none" stroke="currentColor" strokeWidth="1.8">
    <path d="M3 13V3M0.8 5L3 2l2.2 3M9 13V3M6.8 5L9 2l2.2 3" />
  </svg>
);
const Spin = ({ tone = "#9a9a9a" }) => (
  <svg width="8" height="13" viewBox="0 0 8 13" fill={tone}>
    <path d="M4 0.5L7.5 5H0.5zM0.5 8H7.5L4 12.5z" />
  </svg>
);
const MiniBars = () => (
  <svg width="14" height="16" viewBox="0 0 14 16" fill="#0a7a3c">
    <rect x="0" y="8" width="2" height="8" /><rect x="4" y="5" width="2" height="8" />
    <rect x="8" y="2" width="2" height="5" /><rect x="8" y="9" width="2" height="3" /><rect x="12" y="0" width="2" height="4" />
  </svg>
);
const FeedbackFlag = () => (
  <svg width="12" height="12" viewBox="0 0 12 12">
    <rect x="0.5" y="0.5" width="11" height="8" fill="none" stroke="#888" />
    <rect x="2" y="2" width="4" height="4" fill="#b71c1c" /><rect x="6" y="2" width="4" height="4" fill="#0a7a3c" />
    <path d="M2 8.5v3l3-3" fill="none" stroke="#888" />
  </svg>
);
const LayoutIcon = ({ kind }) => (
  <svg width="13" height="13" viewBox="0 0 13 13" fill={kind === "split" ? "#222" : "#6a6d70"}>
    {kind === "grid" && <path d="M0 0h6v6H0zM7 0h6v6H7zM0 7h6v6H0zM7 7h6v6H7z" />}
    {kind === "square" && <rect width="13" height="13" />}
    {kind === "split" && <path d="M0 0h13v5H0zM0 6h6v7H0zM7 6h6v7H7z" />}
  </svg>
);
const CursorIcon = () => (
  <svg width="11" height="15" viewBox="0 0 11 15" fill="#111">
    <path d="M1 0v12l3-3 2 5 2.5-1-2-5h4z" />
  </svg>
);
const CrossIcon = () => (
  <svg width="13" height="13" viewBox="0 0 13 13" stroke="#777">
    <path d="M6.5 0v5M6.5 8v5M0 6.5h5M8 6.5h5" />
  </svg>
);
const DrawIcon = () => (
  <svg width="12" height="16" viewBox="0 0 12 16">
    <rect x="0" y="0" width="12" height="16" fill="#b9b9b9" />
    <line x1="1" y1="15" x2="11" y2="1" stroke="#c00" strokeWidth="2" />
  </svg>
);
const ChartSmall = () => (
  <svg width="13" height="11" viewBox="0 0 13 11" fill="none" stroke="#333">
    <rect x="0.5" y="0.5" width="12" height="10" />
    <path d="M2 8l3-3 2 1.5L11 2.5" />
  </svg>
);

// ---- chart parts ----
const Candles = ({ list }) =>
  list.map((c, i) => {
    const x = Math.round(c.cx);
    const fill = c.c ? GREEN : ORANGE;
    return (
      <g key={i}>
        <line x1={x + 0.5} x2={x + 0.5} y1={c.wickTop} y2={c.wickBottom} stroke={fill} />
        <rect x={x - 1} y={c.top} width="3" height={Math.max(1, c.bottom - c.top)} fill={fill} />
      </g>
    );
  });
const Dots = ({ list, color }) => list.map((p, i) => <circle key={i} cx={p[0]} cy={p[1]} r="2" fill={color} />);
const Curve = ({ pts, color, w = 1.3 }) => (
  <polyline points={toPoints(pts)} fill="none" stroke={color} strokeWidth={w} strokeLinejoin="round" />
);
const VGrid = ({ xs, y1, y2 }) => xs.map((x) => <line key={x} x1={x} x2={x} y1={y1} y2={y2} stroke="#6e6e6e" />);
const AxisText = ({ x, y, children, fill = "#333" }) => (
  <text x={x} y={y + 4} fontSize="11" fill={fill}>{children}</text>
);

const LeftMain = () => (
  <svg width="822" height="562" viewBox="31 21 822 562">
    <VGrid xs={leftGrid} y1={21} y2={566} />
    <line x1="31" x2="799" y1="316.5" y2="316.5" stroke={ORANGE} strokeWidth="1.3" />
    <line x1="322" x2="799" y1="318.5" y2="318.5" stroke="#444" strokeDasharray="6 3" />
    <line x1="322" x2="799" y1="267.5" y2="267.5" stroke="#1c6e42" strokeDasharray="6 3" />
    <line x1="216" x2="799" y1="187.5" y2="187.5" stroke="#1c6e42" strokeDasharray="1 2" />
    <line x1="203" x2="799" y1="414.5" y2="414.5" stroke="#1c6e42" strokeDasharray="1 2" />
    <line x1="31" x2="799" y1="435.5" y2="435.5" stroke="#165f8f" strokeWidth="1.2" />
    <line x1="310" x2="799" y1="431.5" y2="431.5" stroke="#1c6e42" strokeDasharray="8 2 2 2" />
    <line x1="38.5" x2="38.5" y1="192" y2="424" stroke={GREEN} />
    {volumeTops.map((t, i) => {
      const x = Math.round(60 / 1.78 + (i * 7.16) / 1.78);
      return <line key={i} x1={x + 0.5} x2={x + 0.5} y1={430 + t / 3} y2="566" stroke={GREEN} strokeWidth="0.85" />;
    })}
    <Curve pts={smaLine} color="#5f8eb8" />
    <Curve pts={bandUpper} color={BAND} />
    <Curve pts={bandMid} color={BAND} />
    <Curve pts={bandLower} color={BAND} />
    <Candles list={leftCandles} />
    <Dots list={leftRed} color="#c4000b" />
    <Dots list={leftBlue} color="#0000c8" />
    <line x1="799.5" x2="799.5" y1="21" y2="583" stroke="#111" />
    <line x1="31" x2="799" y1="566" y2="566" stroke="#111" strokeWidth="1.6" />
    {Array.from({ length: 24 }, (_, i) => (
      <line key={i} x1={42 + i * 32.1} x2={42 + i * 32.1} y1="566" y2="569" stroke="#111" />
    ))}
    {leftPrices.map((p, i) => {
      const y = 46 + i * 25.93;
      return (
        <g key={i}>
          <line x1="797" x2="800" y1={y} y2={y} stroke="#111" />
          {p && <AxisText x={803} y={y}>{p}</AxisText>}
        </g>
      );
    })}
    {dateLabels.map(([t, x]) => (
      <text key={t + x} x={x} y={580} fontSize="11.5" fill="#333">{t}</text>
    ))}
    <path d="M783 31h3v75h-3" fill="none" stroke="#222" strokeWidth="1.2" />
    <PipsText transform="translate(782 83) rotate(-90)">25 pips</PipsText>
  </svg>
);

const RightMain = () => (
  <svg width="542" height="562" viewBox="896 21 542 562">
    <VGrid xs={rightGrid} y1={21} y2={566} />
    {rightBands.map((b, i) => <Curve key={i} pts={b} color={BAND} />)}
    <Candles list={rightCandles} />
    <Dots list={rightRed} color="#c4000b" />
    <Dots list={rightBlue} color="#0000c8" />
    <line x1="896.5" x2="896.5" y1="21" y2="583" stroke="#111" />
    <line x1="1384.5" x2="1384.5" y1="21" y2="583" stroke="#111" />
    {["1.00340", "1.00230", "1.00120", "1.00010", "0.99900"].map((p, i) => {
      const y = 36 + i * 25.3;
      return (
        <g key={p}>
          <line x1="1382" x2="1385" y1={y} y2={y} stroke="#111" />
          <AxisText x={1388} y={y}>{p}</AxisText>
        </g>
      );
    })}
    <path d="M1368 31h4v110" fill="none" stroke="#222" strokeWidth="1.2" />
    <PipsText transform="translate(1369 104) rotate(-90)">50 pips</PipsText>
  </svg>
);

const LeftAtr = () => (
  <svg width="822" height="38" viewBox="31 589 822 38">
    <VGrid xs={leftGrid} y1={589} y2={627} />
    <Curve pts={atrLeft} color="#1f6aa5" />
    <line x1="799.5" x2="799.5" y1="589" y2="627" stroke="#111" />
    <AxisText x={803} y={607}>0.07870</AxisText>
    <text x="37" y="601" fontSize="12" fill="#8a8a8a">Average True Range (10) <tspan fill="#1f6aa5">0.0851</tspan></text>
    <text x="837" y="605" fontSize="11" fontWeight="bold" fill="#111">×</text>
  </svg>
);
const LeftStoch = () => (
  <svg width="822" height="89" viewBox="31 632 822 89">
    <VGrid xs={leftGrid} y1={632} y2={721} />
    <line x1="31" x2="799" y1="650.5" y2="650.5" stroke="#555" />
    <line x1="31" x2="799" y1="703.5" y2="703.5" stroke="#555" />
    <Curve pts={stochGreenLeft} color="#1c7a2e" w={1.1} />
    <Curve pts={stochRedLeft} color="#cc1d1d" w={1.1} />
    <line x1="799.5" x2="799.5" y1="632" y2="721" stroke="#111" />
    <AxisText x={803} y={648}>80</AxisText>
    <AxisText x={803} y={661}>66.87</AxisText>
    <AxisText x={803} y={690}>33.06</AxisText>
    <AxisText x={803} y={701}>20</AxisText>
    <text x="37" y="644" fontSize="12" fill="#8a8a8a">Stochastic Oscillator (5, 3, 3, Simple) <tspan fill="#c81e1e">86.08</tspan>, <tspan fill="#1c7a2e">94.98</tspan></text>
    <text x="837" y="649" fontSize="11" fontWeight="bold" fill="#111">×</text>
  </svg>
);
const RightAtr = () => (
  <svg width="542" height="45" viewBox="896 589 542 45">
    <VGrid xs={rightGrid} y1={589} y2={634} />
    <Curve pts={atrRight} color="#1f6aa5" />
    <line x1="896.5" x2="896.5" y1="589" y2="634" stroke="#111" />
    <line x1="1384.5" x2="1384.5" y1="589" y2="634" stroke="#111" />
    <AxisText x={1388} y={611}>0.00090</AxisText>
    <text x="901" y="601" fontSize="12" fill="#8a8a8a">Average True Range (10) <tspan fill="#1f6aa5">0.00144</tspan></text>
    <text x="1423" y="605" fontSize="11" fontWeight="bold" fill="#111">×</text>
  </svg>
);
const RightStoch = () => (
  <svg width="542" height="82" viewBox="896 639 542 82">
    <VGrid xs={rightGrid} y1={639} y2={721} />
    <line x1="896" x2="1384" y1="657.5" y2="657.5" stroke="#555" />
    <line x1="896" x2="1384" y1="704.5" y2="704.5" stroke="#555" />
    <Curve pts={stochGreenRight} color="#1c7a2e" w={1.1} />
    <Curve pts={stochRedRight} color="#cc1d1d" w={1.1} />
    <line x1="896.5" x2="896.5" y1="639" y2="721" stroke="#111" />
    <line x1="1384.5" x2="1384.5" y1="639" y2="721" stroke="#111" />
    <AxisText x={1388} y={655}>80</AxisText>
    <AxisText x={1388} y={665}>68.37</AxisText>
    <AxisText x={1388} y={693}>33.34</AxisText>
    <AxisText x={1388} y={702}>20</AxisText>
    <text x="901" y="651" fontSize="12" fill="#8a8a8a">Stochastic Oscillator (5, 3, 3, Simple) <tspan fill="#c81e1e">51.11</tspan>, <tspan fill="#1c7a2e">44.49</tspan></text>
    <text x="1423" y="655" fontSize="11" fontWeight="bold" fill="#111">×</text>
  </svg>
);

const timeframes = [["m","1"],["m","5"],["m","10"],["m","30"],["h","1"],["h","4"],["D","1"],["W","1"],["M","1"],["T","8"]];
const Tools = () => (
  <ToolStrip>
    <ToolBtn><Magnifier /></ToolBtn>
    <ToolBtn><Magnifier minus /></ToolBtn>
    <ToolSep />
    <ToolBtn><CandleIcon /></ToolBtn>
    <ToolSep />
    <ToolBtn><FaFacebook size={15} /></ToolBtn>
    <ToolSep />
    <ToolBtn><ShapesIcon /></ToolBtn>
    <ToolSep />
    <ToolBtn><ChartGearIcon /></ToolBtn>
    <ToolSep />
    {timeframes.map(([a, b]) => (
      <TfBtn key={a + b} $active={a + b === "m30"}><b>{a}</b><i>{b}</i></TfBtn>
    ))}
  </ToolStrip>
);

const Scrollbar = ({ thumb }) => (
  <ScrollStrip>
    <ArrowLeft />
    <ScrollThumb $w={thumb} />
    <ArrowRight />
  </ScrollStrip>
);

const LeftChart = () => (
  <ChartWindow $w={858} $mr={4} $side={2}>
    <WinHeader>
      <Grip $w={4} $h={14} />
      <SymbolChip $ml={9}>A</SymbolChip>
      <WinSymbol $ml={16}>USDJPY</WinSymbol>
      <Caret $ml={11} />
      <HeadSep $left={9} $right={12} />
      <HeadTf><b>m</b><i>30</i></HeadTf>
      <Caret $ml={8} />
      <WinButtons $mr={4}><RestoreBox /><XMark size={7} /></WinButtons>
    </WinHeader>
    <Pane $h={562} $mb={6}>
      <Tools />
      <Canvas>
        <LeftMain />
        <QuoteBtn $x={325} $w={70}><span>108.86<small>8</small></span><em>↗</em></QuoteBtn>
        <QuoteBtn $x={399} $w={70}><em>↗</em><span>108.86<small>8</small></span></QuoteBtn>
        <QuoteBar $x={325} $w={101} $color={ORANGE} />
        <QuoteBar $x={430} $w={39} $color={GREEN} />

        <TagBar $x={6} $y={160}>
          <TagCell $w={28} $first><Grip $w={3} $h={9} />TP</TagCell>
          <TagCell $w={61}>Pips: 82.1</TagCell>
          <TagCell $w={72}>EUR: 27.22</TagCell>
        </TagBar>
        <TagBox $x={173} $y={160}><XMark /></TagBox>

        <TagBar $x={6} $y={240}>
          <TagCell $w={55} $first><Grip $w={3} $h={9} />ATP 3 ♦</TagCell>
          <TagCell $w={66}>Pips: 55.0</TagCell>
          <TagCell $w={77}>EUR: 18.23</TagCell>
          <TagCell $w={87} $clear>Qty: 0.01 Lots</TagCell>
        </TagBar>
        <TagBox $x={297} $y={240}><XMark /></TagBox>

        <TagBar $x={6} $y={291} $tone="dark">
          <TagCell $w={55} $first $tone="dark"><Grip $w={3} $h={9} />ATP 2 ♦</TagCell>
          <TagCell $w={66} $tone="dark">Pips: 38.0</TagCell>
          <TagCell $w={77} $tone="dark">EUR: 12.60</TagCell>
          <TagCell $w={87} $tone="dark">Qty: 0.01 Lots</TagCell>
        </TagBar>
        <TagBox $x={297} $y={291} $tone="dark"><XMark /></TagBox>

        <TagBar $x={6} $y={387}>
          <TagCell $w={27} $first><Grip $w={3} $h={9} />SL</TagCell>
          <TagCell $w={55}>Pips: 5.6</TagCell>
          <TagCell $w={66}>EUR: 1.86</TagCell>
        </TagBar>
        <TagBox $x={159} $y={387}><XMark /></TagBox>

        <TagBar $x={6} $y={403} $tone="solid">
          <TagCell $w={69} $first $solid $pad={6}>0.04 Lots ↑</TagCell>
          <TagCell $w={61} $solid>Pips: 38.5</TagCell>
          <TagCell $w={73} $solid>EUR: 12.76</TagCell>
        </TagBar>
        <TagBox $x={214} $y={403} $tone="solid"><FaShieldAlt size={9} /></TagBox>
        <TagBox $x={231} $y={403} $tone="solid"><UndoIcon /></TagBox>
        <TagBox $x={249} $y={403} $tone="solid"><DoubleUp /></TagBox>
        <TagBox $x={265} $y={403} $tone="solid"><XMark /></TagBox>

        <PriceTag $y={160}>109.304</PriceTag>
        <PriceTag $y={240}>109.033</PriceTag>
        <PriceBack $y={287} $color={ORANGE} />
        <PriceTag $y={291} $tone="dark">108.863</PriceTag>
        <PriceTag $y={387}>108.539</PriceTag>
        <PriceBack $y={406} $color="#0f6ca8" />
        <PriceTag $y={403} $tone="solid">108.483</PriceTag>
        <TimeTag><Grip $w={3} $h={10} />18:19</TimeTag>
      </Canvas>
    </Pane>
    <Pane $h={38} $mb={5}><Spacer /><Canvas><LeftAtr /></Canvas></Pane>
    <Pane $h={89}><Spacer /><Canvas><LeftStoch /></Canvas></Pane>
    <Scrollbar thumb={19} />
  </ChartWindow>
);

const RightChart = () => (
  <ChartWindow $w={581} $mr={6} $side={5}>
    <WinHeader>
      <Grip $w={4} $h={14} />
      <SymbolChip $ml={8} $bg="transparent"><DrawIcon /></SymbolChip>
      <WinSymbol $ml={17}>USDCHF</WinSymbol>
      <Caret $ml={11} />
      <HeadSep $left={9} $right={12} />
      <HeadTf><b>h</b><i>1</i></HeadTf>
      <Caret $ml={6} />
      <WinButtons $mr={1}><RestoreBox /><XMark size={7} /></WinButtons>
    </WinHeader>
    <Pane $h={562} $mb={6}>
      <Tools />
      <Canvas>
        <RightMain />
        <QuoteBtn $x={186} $w={70}><span>0.9885<small>4</small></span><em>↗</em></QuoteBtn>
        <QuoteBtn $x={260} $w={70}><em>↗</em><span>0.9885<small>5</small></span></QuoteBtn>
        <QuoteBar $x={186} $w={48} $color={ORANGE} />
        <QuoteBar $x={238} $w={92} $color={GREEN} />
      </Canvas>
    </Pane>
    <Pane $h={45} $mb={5}><Spacer /><Canvas><RightAtr /></Canvas></Pane>
    <Pane $h={82}><Spacer /><Canvas><RightStoch /></Canvas></Pane>
    <Scrollbar thumb={8} />
  </ChartWindow>
);

const columns = ["Created\u00a0\u00a0(UT...","Last Modified...","Margin","Symbol","Quantity","Volume","Direction","Entry","T/P","S/L","Swap","Commissions","Pips","Gross EUR","Net EUR"];
const values = ["4 Dec 2019 1...","4 Dec 2019 1...","7.22","USDJPY","0.04","4 000.00 USD","Buy","108.483","109.304","108.539","0.00","-0.09","38.5","12.76","12.58"];
const status = [["Balance:","59.18"],["Equity:","71.76"],["Margin:","7.22"],["Free Margin:","64.54"],["Margin Level:","995.15%"],["Smart Stop Out:","50.00%"],["Unr. Gross P&L:","12.76",true],["Unr. Net P&L:","12.58",true]];

const BottomPanel = () => (
  <>
    <BottomTabs>
      <BTab $w={75} $mr={5} $active $pad={2}>Positions <Badge $bg={GREEN} $color="#cfe0d6">1</Badge></BTab>
      <BTab $w={67} $mr={5}>Orders <Badge $bg="#a3a7aa" $color="#b9bcbe">0</Badge></BTab>
      <BTab $w={47} $mr={5}>History</BTab>
      <BTab $w={90} $mr={5}>Price Alerts <Badge $bg="#0c4a2a" $color="#cfe0d6">2</Badge></BTab>
      <BTab $w={79}>Transactions</BTab>
      <BTab $w={98} $mr={5} $auto $pad={7}><MiniBars />Autochartist</BTab>
      <BTab $w={82}>Feedback <FeedbackFlag /></BTab>
    </BottomTabs>
    <BottomBody>
      <FilterBar>
        <SearchBox><Magnifier plain /></SearchBox>
        <FilterSelect>All Directions (... <Caret /></FilterSelect>
        <FilterSelect>Not Aggregated (... <Caret /></FilterSelect>
        <GreenBtn $w={91} $auto><FilePlus size={13} strokeWidth={1.3} />New Order</GreenBtn>
        <GreenBtn $w={109}><span>&nbsp;&nbsp;Close (1) B...</span><SplitPart><Caret $color="#7fb197" /></SplitPart></GreenBtn>
      </FilterBar>
      <TableCard>
        <TableHead>
          {columns.map((c, i) => (
            <HeadCell key={c} $left={i < 2} $pad={i === 1} $end={i === 14}>{c}</HeadCell>
          ))}
        </TableHead>
        <TableRow>
          <RowIcons>
            <RowIcon>i</RowIcon>
            <RowIcon><FaShieldAlt size={13} /></RowIcon>
            <RowIcon><FaCog size={13} /></RowIcon>
          </RowIcons>
          <RowCells>
            {values.map((v, i) => (
              <RowCell key={i} $left={i < 2} $pad={i === 1} $green={i > 11}>{v}</RowCell>
            ))}
          </RowCells>
          <RowActions>
            <ActionBtn><UndoIcon /></ActionBtn>
            <ActionBtn><DoubleUp /></ActionBtn>
            <ActionBtn><XMark size={11} w={2} /></ActionBtn>
          </RowActions>
        </TableRow>
      </TableCard>
      <StatusBar>
        {status.map(([l, v, g], i) => (
          <StatusItem key={l} $first={i === 0} $end={i === 7} $green={g}>{l}<span>{v}</span></StatusItem>
        ))}
      </StatusBar>
    </BottomBody>
  </>
);

// the top two sell rows are behind the dialog, only the second row's bar peeks out
const sellRows = [[30, ""], [5, ""], [10, "108.865"], [80, "108.864"]];
const buyRows = [[16, "108.868"], [30, "108.870"], [50, "108.871"]];

const SidePanel = () => (
  <Sidebar>
    <SideTabs>
      <STab $w={44} $mr={2} $active>Order</STab>
      <STab $w={35} $mr={5}>DoM</STab>
      <STab $w={59} $mr={5}>Calendar</STab>
      <STab $w={73}>Autochartist</STab>
    </SideTabs>
    <SideBody>
      <SymbolRow>
        <ChipBtn><InnerChip>A</InnerChip></ChipBtn>
        <SymbolSelect>USDJPY <Caret /></SymbolSelect>
        <ChipBtn $ml={143}><Star size={13} fill="#333" /></ChipBtn>
        <ChipBtn><ChartSmall /></ChipBtn>
        <ChipBtn><Bell size={13} strokeWidth={1.4} /></ChipBtn>
        <ChipBtn />
      </SymbolRow>
      <Scroller>
        <Section>
          <SectionHead>New Order<ChevBtn><ChevronUp size={12} strokeWidth={2.4} /></ChevBtn></SectionHead>
          <Card>
            <InstrumentRow><Check size={12} />US Dollar vs Japanese Yen<strong>+23.10 (+0.21%)</strong></InstrumentRow>
            <OrderTabs>
              <OrderTab $active>Market</OrderTab>
              <OrderTab>Limit</OrderTab>
              <OrderTab>Stop</OrderTab>
              <OrderTab>Stop Limit</OrderTab>
            </OrderTabs>
            <QuoteRow>
              <QuoteBox>Sell<b>108.864</b></QuoteBox>
              <QuoteBox>Buy<b>108.868</b></QuoteBox>
            </QuoteRow>
            <StatsLine>High: 109.78; Low: 108.43;</StatsLine>
            <RangeLabel>Market Range <InfoBox>i</InfoBox></RangeLabel>
            <RangeInput><RangeField><Spin tone="#8f8f8f" /></RangeField>Pips</RangeInput>
            <TpRow><DimCheck />Take Profit</TpRow>
            <DimBlock />
            <PlaceBtn>Place Order</PlaceBtn>
          </Card>
        </Section>
        <Section>
          <SectionHead><ChevBtn><ChevronUp size={12} strokeWidth={2.4} /></ChevBtn></SectionHead>
          <Card $pad="15px 10px 11px">
            <SentBars>
              <SentBar $flex={227} $color={ORANGE} />
              <SentBar $flex={88} $color={GREEN} />
            </SentBars>
            <SentPct><span>72%</span><span>28%</span></SentPct>
          </Card>
        </Section>
        <Section>
          <SectionHead><ChevBtn><ChevronUp size={12} strokeWidth={2.4} /></ChevBtn></SectionHead>
          <DomGrid>
            <DomCol>
              {sellRows.map(([q, p]) => (
                <DomRowBox key={q} $side="sell">
                  <DomBar $side="sell" style={{ width: q * 1.96 }} />
                  {p && <span>{q}</span>}
                  <span>{p}</span>
                </DomRowBox>
              ))}
            </DomCol>
            <DomCol>
              {buyRows.map(([q, p]) => (
                <DomRowBox key={p} $side="buy">
                  <DomBar $side="buy" style={{ width: q * 1.94 }} />
                  <span>{p}</span><span>{q}</span>
                </DomRowBox>
              ))}
            </DomCol>
          </DomGrid>
        </Section>
        {["Autochartist", "Calendar"].map((t) => (
          <Section $closed key={t}>
            <SectionHead><Grip $w={5} $h={20} />{t}<ChevBtn><ChevronDown size={12} strokeWidth={2.4} /></ChevBtn></SectionHead>
          </Section>
        ))}
        <Section>
          <SectionHead><Grip $w={5} $h={20} />Market Details<ChevBtn><ChevronUp size={12} strokeWidth={2.4} /></ChevBtn></SectionHead>
          <Card>
            <DetailRow><span>Base Asset</span><span>USD</span></DetailRow>
          </Card>
        </Section>
      </Scroller>
    </SideBody>
  </Sidebar>
);

const profitRows = [
  { label: "Take Profit 1", on: false, pips: "30", qty: "0.01" },
  { label: "Take Profit 2", on: true, pips: "38", qty: "0.01", bad: true },
  { label: "Take Profit 3", on: true, pips: "55", qty: "0.01" },
  { label: "Take Profit 4", on: false, pips: "40", qty: "0.01" },
];

const ProtectionModal = () => (
  <Modal>
    <ModalHead>
      Advanced Protection for PID36213369
      <X size={14} strokeWidth={1} color="#333" />
    </ModalHead>
    <ModalColumns>
      <ModalCol>
        <ColTitle>Advanced Take Profit</ColTitle>
        <Rule $mt={15} />
        <ProfitGrid>
          <span />
          <GridHead>Pips</GridHead>
          <GridHead $ml={15}>Quantity</GridHead>
          {profitRows.map((r) => (
            <React.Fragment key={r.label}>
              <CheckLabel>
                <CheckBox $nudge={-4}>{r.on && <Check size={11} strokeWidth={3} />}</CheckBox>
                <LabelText>{r.label}</LabelText>
              </CheckLabel>
              <Field $state={r.on ? (r.bad ? "bad" : "on") : "off"}>{r.pips}<Spin /></Field>
              <Field $state={r.on ? "on" : "off"} $ml={15}>
                <Spin tone={r.on ? "#9a9a9a" : "#c2c7ca"} />
                <QtyValue>{r.qty}</QtyValue>
                <Caret $color={r.on ? "#8a8a8a" : "#b8bdc0"} />
              </Field>
            </React.Fragment>
          ))}
          <Remaining>Remaining Quantity</Remaining>
          <Field $state="on" $span="2 / 4">0.02 (50%)</Field>
        </ProfitGrid>
        <Rule $mt={11} $light />
        <ServerRow $mt={10} $cols="150px 224px">
          <span>Server Take Profit</span>
          <Field $state="off">109.304</Field>
        </ServerRow>
      </ModalCol>
      <ColDivider />
      <ModalCol>
        <ColTitle>Advanced Stop Loss</ColTitle>
        <Rule $mt={15} />
        <CheckLabel $mt={13}><CheckBox />Move Stop Loss to Break Even</CheckLabel>
        <TriggerRow>
          <TriggerLabel>Trigger when gaining</TriggerLabel>
          <Field $state="off" $w={100}>1<Spin /></Field>
          <span>&nbsp;pips</span>
        </TriggerRow>
        <Rule $mt={38} $light />
        <ServerRow $mt={10} $cols="127px 247px">
          <span>Server Stop Loss</span>
          <Field $state="off">108.539</Field>
        </ServerRow>
      </ModalCol>
    </ModalColumns>
    <NoteBox>
      <div>
        * IC Markets cTrader must be running and connected to the internet for Advanced Protection to work properly.
        <br />
        ** Stop Loss will be moved to break-even (covering also Commission) when spot price has moved this distance from entry price.
      </div>
      <NoteScroll><NoteUp /><NoteThumb /><NoteDown /></NoteScroll>
    </NoteBox>
    <ModalButtons>
      <ModalBtn>Apply</ModalBtn>
      <ModalBtn $dark>Cancel</ModalBtn>
    </ModalButtons>
  </Modal>
);

export default function App() {
  return (
    <Page>
      <GlobalStyle />
      <LeftArea>
        <ChartsRow>
          <LeftChart />
          <RightChart />
          <SideToolbar>
            <Grip $w={16} $h={6} />
            <BarBtn><LayoutIcon kind="grid" /></BarBtn>
            <BarBtn><LayoutIcon kind="square" /></BarBtn>
            <BarBtn $active><LayoutIcon kind="split" /></BarBtn>
            <ToolSep />
            <BarBtn $active><CursorIcon /></BarBtn>
            <BarBtn><CrossIcon /></BarBtn>
          </SideToolbar>
        </ChartsRow>
        <BottomPanel />
      </LeftArea>
      <SidePanel />
      <ProtectionModal />
    </Page>
  );
}
